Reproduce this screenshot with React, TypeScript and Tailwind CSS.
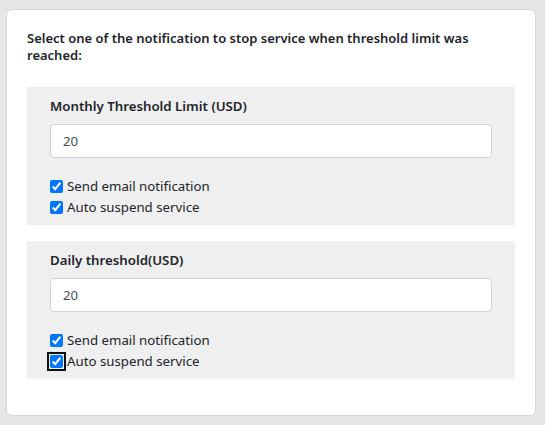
import { useState } from 'react'

type Section = {
  title: string
  value: string
}

const sections: Section[] = [
  { title: 'Monthly Threshold Limit (USD)', value: '20' },
  { title: 'Daily threshold(USD)', value: '20' },
]

function ThresholdPanel({ section, focusLast }: { section: Section; focusLast?: boolean }) {
  const [value, setValue] = useState(section.value)
  const [email, setEmail] = useState(true)
  const [suspend, setSuspend] = useState(true)

  return (
    <div className="bg-[#efefef] pl-[23px] pr-[23px] pt-[9px] pb-[7px]">
      <p className="text-[13.25px] font-semibold leading-[20px] text-[#212529]">{section.title}</p>
      <input
        className="mt-[8px] block h-[34px] w-full rounded-[4px] border border-[#ced4da] bg-white px-[12px] text-[13.25px] text-[#495057] outline-none"
        value={value}
        onChange={(e) => setValue(e.target.value)}
      />
      <div className="mt-[18px] flex flex-col">
        <label className="flex h-[21px] items-center text-[13.25px] text-[#212529]">
          <input
            type="checkbox"
            className="m-0 mr-[4px] h-[13px] w-[13px] accent-[#0075ff]"
            checked={email}
            onChange={() => setEmail(!email)}
          />
          Send email notification
        </label>
        <label className="flex h-[21px] items-center text-[13.25px] text-[#212529]">
          <input
            type="checkbox"
            className={
              focusLast
                ? 'm-0 mr-[4px] h-[13px] w-[13px] rounded-[2px] accent-[#0075ff] outline-2 outline-offset-[1px] outline-[#101010] outline-solid'
                : 'm-0 mr-[4px] h-[13px] w-[13px] accent-[#0075ff]'
            }
            checked={suspend}
            onChange={() => setSuspend(!suspend)}
          />
          Auto suspend service
        </label>
      </div>
    </div>
  )
}

export default function App() {
  return (
    <div className="min-h-[425px] bg-[#e5e6e8] pt-[9px] pl-[6px] pr-[9px] pb-[10px] font-['Noto_Sans',sans-serif]">
      <div className="w-[530px] rounded-[6px] border border-[#d6d7d9] bg-white px-[20px] pt-[20px] pb-[19px]">
        <h2 className="text-[13px] font-semibold leading-[17px] text-[#212529]">
          Select one of the notification to stop service when threshold limit was reached:
        </h2>
        <div className="mt-[23px] flex flex-col gap-[16px]">
          {sections.map((s, i) => (
            <ThresholdPanel key={s.title} section={s} focusLast={i === 1} />
          ))}
        </div>
        <div className="h-[17px]" />
      </div>
    </div>
  )
}
